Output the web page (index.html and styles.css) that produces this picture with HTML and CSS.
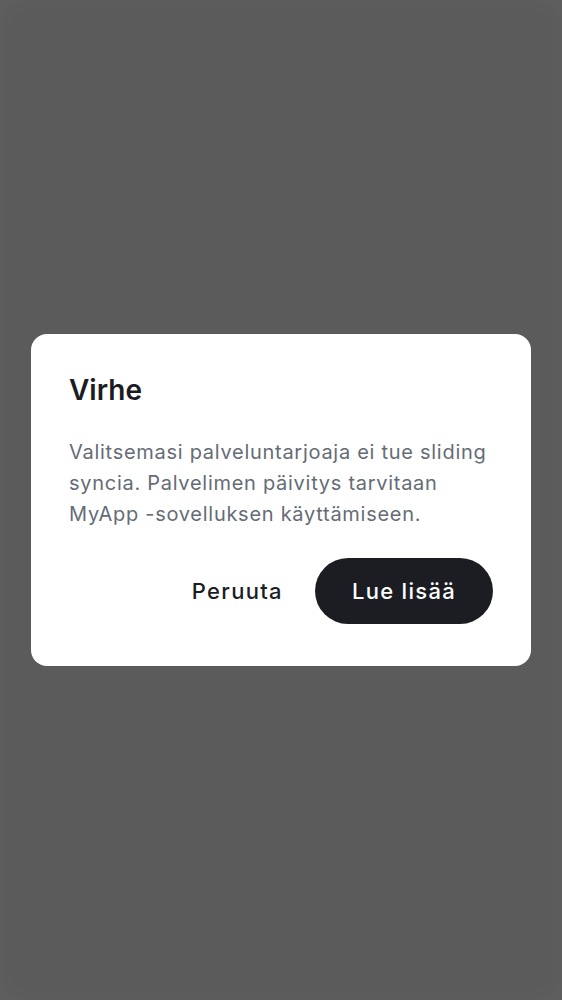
FILE: index.html
```
<!DOCTYPE html>
<html lang="fi">
<head>
<meta charset="utf-8">
<link rel="stylesheet" href="styles.css">
</head>
<body>
<div class="scrim">
  <div class="dialog" role="dialog">
    <h2 class="title">Virhe</h2>
    <p class="message">Valitsemasi palveluntarjoaja ei tue sliding syncia. Palvelimen päivitys tarvitaan MyApp -sovelluksen käyttämiseen.</p>
    <div class="actions">
      <button class="btn btn-text">Peruuta</button>
      <button class="btn btn-primary">Lue lisää</button>
    </div>
  </div>
</div>
</body>
</html>
```
FILE: styles.css
```
html, body {
  margin: 0;
  padding: 0;
  height: 100%;
}
body {
  font-family: Inter, "Noto Sans", sans-serif;
  background: #5b5b5b;
}
.scrim {
  height: 1000px;
  display: flex;
  align-items: center;
  justify-content: center;
  background: #5b5b5b;
  box-shadow: inset 0 0 24px rgba(255, 255, 255, 0.04);
}
.dialog {
  width: 500px;
  box-sizing: border-box;
  background: #ffffff;
  border-radius: 16px;
  padding: 38px 38px 42px;
}
.title {
  margin: 0;
  font-size: 28px;
  line-height: 36px;
  font-weight: 600;
  letter-spacing: 0;
  color: #1b1d22;
}
.message {
  margin: 29px 0 0;
  font-size: 20px;
  line-height: 31px;
  font-weight: 400;
  letter-spacing: 0.72px;
  color: #656c76;
}
.actions {
  margin-top: 28px;
  display: flex;
  justify-content: flex-end;
  align-items: center;
  gap: 32px;
}
.btn {
  font-family: inherit;
  font-size: 22px;
  font-weight: 500;
  letter-spacing: 1.3px;
  border: none;
  cursor: pointer;
  height: 66px;
  border-radius: 33px;
}
.btn-text {
  background: transparent;
  color: #1b1d22;
  padding: 0;
}
.btn-primary {
  background: #1b1d22;
  color: #ffffff;
  padding: 0 37px;
  min-width: 178px;
}
```
